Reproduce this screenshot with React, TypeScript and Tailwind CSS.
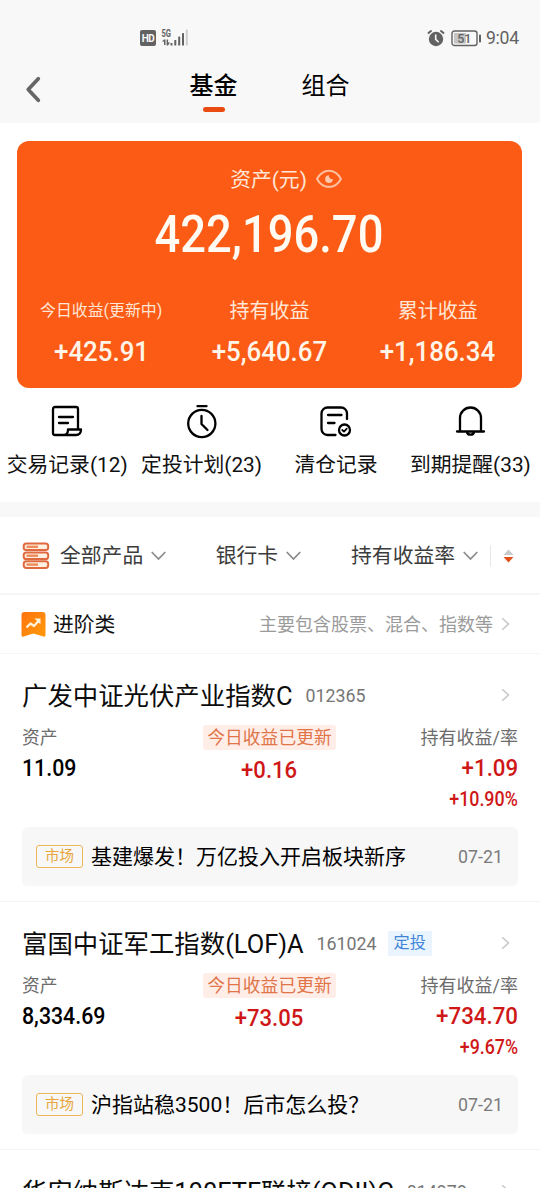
import type { ReactNode } from 'react';

type Fund = {
  name: string;
  code: string;
  auto?: boolean;
  asset?: string;
  today?: string;
  hold?: string;
  rate?: string;
  news?: string;
  date?: string;
};

const funds: Fund[] = [
  {
    name: '广发中证光伏产业指数C',
    code: '012365',
    asset: '11.09',
    today: '+0.16',
    hold: '+1.09',
    rate: '+10.90%',
    news: '基建爆发！万亿投入开启板块新序',
    date: '07-21',
  },
  {
    name: '富国中证军工指数(LOF)A',
    code: '161024',
    auto: true,
    asset: '8,334.69',
    today: '+73.05',
    hold: '+734.70',
    rate: '+9.67%',
    news: '沪指站稳3500！后市怎么投？',
    date: '07-21',
  },
  {
    name: '华安纳斯达克100ETF联接(QDII)C',
    code: '014978',
  },
];

function StatusBar() {
  return (
    <div className="flex h-[52px] items-end justify-between pr-[21px] pb-1 pl-[140px] text-[#626262]">
      <div className="flex h-5 items-center gap-[5px]">
        <div className="flex h-4 w-4 items-center justify-center rounded-[2px] bg-[#626262] text-[10px] font-bold tracking-tighter text-[#f8f8f8]">
          HD
        </div>
        <svg width="28" height="18" viewBox="0 0 28 18" fill="currentColor">
          <text x="0.5" y="8" fontSize="10" fontWeight="700" textLength="9.5" lengthAdjust="spacingAndGlyphs">
            5G
          </text>
          <path d="M3 10.5h1.5V16H3v-3.500H.8zM5.600 10.500h1.500v3H9L7 16.500H5.600z" />
          <rect x="9.5" y="14" width="2" height="2.5" rx="0.6" />
          <rect x="13.3" y="11" width="2" height="5.5" rx="0.6" />
          <rect x="17.2" y="7.5" width="2" height="9" rx="0.6" />
          <rect x="21" y="4" width="2" height="12.5" rx="0.6" />
          <rect x="24.8" y="0.5" width="2" height="16" rx="0.6" fill="#cfcfcf" />
        </svg>
      </div>
      <div className="flex h-5 items-center">
        <svg width="18" height="18" viewBox="0 0 18 18" fill="none">
          <circle cx="9" cy="10" r="7.2" fill="currentColor" />
          <path d="M1.500 4 4 2M16.500 4 14 2" stroke="currentColor" strokeWidth="2" strokeLinecap="round" />
          <path d="M8.700 6v4.300l2.500 2.500" stroke="#f8f8f8" strokeWidth="1.6" strokeLinecap="round" />
        </svg>
        <svg className="ml-[6px]" width="31" height="17" viewBox="0 0 31 17" fill="none">
          <rect x="1" y="1" width="25" height="14.5" rx="2.5" stroke="currentColor" strokeWidth="1.4" />
          <rect x="3" y="3" width="12" height="10.5" fill="#c4c4c4" />
          <rect x="28" y="4.5" width="2" height="8" rx="0.8" fill="currentColor" />
          <text x="13.3" y="12.7" fontSize="12.5" fontWeight="500" textAnchor="middle" fill="currentColor">
            51
          </text>
        </svg>
        <span className="ml-1 text-[17.6px] leading-5 tracking-[-0.2px]">9:04</span>
      </div>
    </div>
  );
}

function Header() {
  return (
    <header className="h-[123px] shrink-0 bg-[#f8f8f8]">
      <StatusBar />
      <div className="flex h-[71px] items-start">
        <svg className="mt-6 ml-6" width="18" height="27" viewBox="0 0 18 27" fill="none">
          <path d="M14.300 2.700 4.200 13.500l10.100 10.800" stroke="#666" strokeWidth="3.7" strokeLinecap="round" strokeLinejoin="round" />
        </svg>
        <div className="mt-[18px] ml-[147.5px] flex flex-col items-center">
          <span className="text-[24px] leading-8 font-medium text-black">基金</span>
          <span className="mt-[5px] h-[5px] w-[22px] rounded-full bg-[#e94b10]" />
        </div>
        <span className="mt-[18px] ml-16 text-[24px] leading-8 text-black">组合</span>
      </div>
    </header>
  );
}

function Summary({ label, value, small }: { label: string; value: string; small?: boolean }) {
  return (
    <div className="flex w-[168.3px] flex-col items-center">
      <span className={small ? 'h-7 text-[15.9px] leading-7 text-[#ffe6d6]' : 'h-7 text-[20px] leading-7 text-[#ffe6d6]'}>
        {label}
      </span>
      <span className="mt-[11px] scale-x-[.94] text-[27.5px] leading-8 font-medium text-[#fff4e8]">{value}</span>
    </div>
  );
}

function AssetCard() {
  return (
    <section className="mt-[18px] mr-[18px] ml-[17px] flex h-[247px] shrink-0 flex-col rounded-xl bg-[#fb5b14]">
      <div className="mt-[25px] flex h-7 items-center justify-center gap-2 pl-[34px]">
        <span className="text-[20.8px] leading-7 text-[#ffe6d6]">资产(元)</span>
        <svg className="-mt-0.5" width="28" height="20" viewBox="0 0 28 20" fill="none">
          <path d="M2 10C8-1 20-1 26 10 20 20.500 8 20.500 2 10Z" stroke="#ffbe9d" strokeWidth="2.1" strokeLinejoin="round" />
          <path d="M14 6.200a3.900 3.900 0 1 0 3.900 3.900A3.200 3.200 0 0 1 14 6.200Z" fill="#ffc9ae" />
        </svg>
      </div>
      <div className="mt-[11px] flex h-[60px] items-center justify-center pr-0.5 text-[51.5px] font-medium text-[#fffaf2]">
        <span className="scale-x-[.88]">422,196.70</span>
      </div>
      <div className="mt-8 flex">
        <Summary label="今日收益(更新中)" value="+425.91" small />
        <Summary label="持有收益" value="+5,640.67" />
        <Summary label="累计收益" value="+1,186.34" />
      </div>
    </section>
  );
}

function Shortcut({ label, children }: { label: string; children: ReactNode }) {
  return (
    <div className="flex w-[134.4px] flex-col items-center">
      <svg width="34" height="36" viewBox="0 0 34 36" fill="none" stroke="#000" strokeWidth="2.3" strokeLinecap="round" strokeLinejoin="round">
        {children}
      </svg>
      <span className="mt-[10px] text-[20.8px] leading-7 whitespace-nowrap text-[#111]">{label}</span>
    </div>
  );
}

function Shortcuts() {
  return (
    <nav className="flex h-[114px] shrink-0 pt-[17px]">
      <Shortcut label="交易记录(12)">
        <path d="M28 24.500V4a2 2 0 0 0-2-2H5a2 2 0 0 0-2 2v24a2 2 0 0 0 2 2h21c3 0 5-2 5-5.500H18c0 3.500-1 5.500-4 5.500" />
        <path d="M9 12h14M9 18h9" />
      </Shortcut>
      <Shortcut label="定投计划(23)">
        <circle cx="16.8" cy="18.5" r="13.6" />
        <path d="M12.500 1.200h9M16.500 11v8l6 6" />
      </Shortcut>
      <Shortcut label="清仓记录">
        <path d="M28 14V8.500A6 6 0 0 0 22 2.500H8.500a6 6 0 0 0-6 6V24a6 6 0 0 0 6 6h8M9 10h13.500M9 18h6.500" />
        <circle cx="25.5" cy="25" r="5.5" />
        <path d="m23.200 25 1.800 1.600 2.800-3" strokeWidth="1.7" />
      </Shortcut>
      <Shortcut label="到期提醒(33)">
        <path d="M7 26V13a10.500 10.500 0 0 1 21 0v13M4 26.500h27M14 27c.4 3.500 6.600 3.500 7 0" />
      </Shortcut>
    </nav>
  );
}

function Down() {
  return (
    <svg width="15" height="10" viewBox="0 0 15 10" fill="none">
      <path d="m1.200 1.500 6.300 6.500 6.300-6.500" stroke="#8a8a8a" strokeWidth="1.7" strokeLinecap="round" />
    </svg>
  );
}

function Right() {
  return (
    <svg className="shrink-0" width="9" height="14" viewBox="0 0 9 14" fill="none">
      <path d="m1.200 1.200 6.300 5.800-6.300 5.800" stroke="#c4c4c4" strokeWidth="1.4" />
    </svg>
  );
}

function Filters() {
  return (
    <div className="flex h-[78px] shrink-0 items-center border-b-2 border-[#f6f6f6] pt-px pl-[22px] text-[20.8px] leading-7 text-[#3c3c3c]">
      <svg width="28" height="28" viewBox="0 0 28 28" fill="none" stroke="#e06a40" strokeWidth="2">
        {[1.5, 10.4, 19.3].map((y) => (
          <g key={y}>
            <rect x="1.7" y={y} width="24.5" height="6.6" rx="2.6" fill="#fff0e2" />
            <path d={`M4.500 ${y + 3.3}h11.500`} strokeWidth="2.4" stroke="#ee8a5c" />
          </g>
        ))}
      </svg>
      <span className="mt-px ml-[10px]">全部产品</span>
      <span className="ml-2">
        <Down />
      </span>
      <span className="mt-px ml-[49.5px]">银行卡</span>
      <span className="ml-2">
        <Down />
      </span>
      <span className="mt-px ml-[50px]">持有收益率</span>
      <span className="ml-2">
        <Down />
      </span>
      <span className="ml-3 h-[22px] w-px bg-[#e6e6e6]" />
      <svg className="ml-3" width="11" height="14" viewBox="0 0 11 14">
        <path d="M5.500.5 10.500 6H.5z" fill="#c9c9c9" />
        <path d="M5.500 13.500.5 8h10z" fill="#e2511b" />
      </svg>
    </div>
  );
}

function Category() {
  return (
    <div className="flex h-[59px] shrink-0 items-center border-b border-[#f6f6f6] pr-[30px] pl-[21px]">
      <svg width="25" height="25" viewBox="0 0 25 25" fill="none">
        <defs>
          <linearGradient id="flag" x1="0" y1="0" x2="1" y2="1">
            <stop stopColor="#ff7410" />
            <stop offset="1" stopColor="#ff9a08" />
          </linearGradient>
        </defs>
        <path d="M3.500 0h18a3 3 0 0 1 3 3v20c0 1.500-1 2-2.200 1.400L12.500 21.500l-9.800 2.900C1.500 25 .5 24.500.5 23V3a3 3 0 0 1 3-3Z" fill="url(#flag)" />
        <path d="m5.500 15.500 4-4 3.500 2.500 4.500-5" stroke="#fff3dc" strokeWidth="2.2" strokeLinejoin="round" />
        <path d="M13.500 6.500h6v6z" fill="#fff3dc" />
      </svg>
      <span className="mt-0.5 ml-[7px] text-[20.8px] leading-7 text-[#111]">进阶类</span>
      <span className="mt-px ml-auto text-[18px] leading-7 text-[#9b9b9b]">主要包含股票、混合、指数等</span>
      <span className="ml-2">
        <Right />
      </span>
    </div>
  );
}

function FundItem({ fund }: { fund: Fund }) {
  return (
    <article className="h-[248px] shrink-0 border-b border-[#f4f4f4] px-[22px]">
      <div className="flex h-[82px] items-center">
        <h2 className="mt-0.5 text-[25.4px] leading-9 whitespace-nowrap text-[#0c0c0c]">{fund.name}</h2>
        <span className="mt-px ml-[13px] text-[17.8px] leading-6 text-[#757575]">{fund.code}</span>
        {fund.auto && (
          <span className="mt-px ml-[11px] flex h-[25px] items-center bg-[#eaf4ff] px-[6px] text-[16.2px] text-[#3f86d8]">定投</span>
        )}
        <span className="mr-2 ml-auto">
          <Right />
        </span>
      </div>
      {fund.asset && (
        <>
          <div className="-mt-[11px] grid h-[102px] grid-cols-[165px_165px_1fr] text-[17.8px] leading-6 text-[#6c6c6c]">
            <div className="flex flex-col items-start pt-px">
              <span>资产</span>
              <span className="mt-0.5 origin-left scale-x-[.87] text-[24.5px] leading-8 font-medium text-black">{fund.asset}</span>
            </div>
            <div className="flex flex-col items-center">
              <span className="rounded-[3px] bg-[#ffeee8] px-1 leading-[25px] text-[#df7549]">今日收益已更新</span>
              <span className="mt-1 scale-x-[.9] text-[24.5px] leading-8 font-medium text-[#cf1717]">{fund.today}</span>
            </div>
            <div className="flex flex-col items-end pt-px">
              <span className="text-[18px]">持有收益/率</span>
              <span className="mt-0.5 origin-right scale-x-[.91] text-[24.5px] leading-8 font-medium text-[#cf1717]">{fund.hold}</span>
              <span className="mt-[3px] origin-right scale-x-[.87] text-[20.5px] leading-6 font-medium text-[#cf1717]">{fund.rate}</span>
            </div>
          </div>
          <div className="flex h-[59px] items-center rounded-md bg-[#f7f7f7] pr-[15px] pl-[14px]">
            <span className="flex h-[23px] w-[47px] items-center justify-center rounded-[3px] border border-[#edb659] text-[14.5px] text-[#e9a63c]">
              市场
            </span>
            <span className="ml-2 text-[21px] leading-7 text-black">{fund.news}</span>
            <span className="ml-auto text-[17.8px] leading-6 text-[#7b7b7b]">{fund.date}</span>
          </div>
        </>
      )}
    </article>
  );
}

export default function App() {
  return (
    <div className="flex h-[1188px] w-[540px] flex-col overflow-hidden bg-white font-[Roboto,'Noto_Sans_CJK_SC',sans-serif]">
      <Header />
      <AssetCard />
      <Shortcuts />
      <div className="h-[15px] shrink-0 bg-[#f8f8f8]" />
      <Filters />
      <Category />
      {funds.map((fund) => (
        <FundItem key={fund.code} fund={fund} />
      ))}
    </div>
  );
}
